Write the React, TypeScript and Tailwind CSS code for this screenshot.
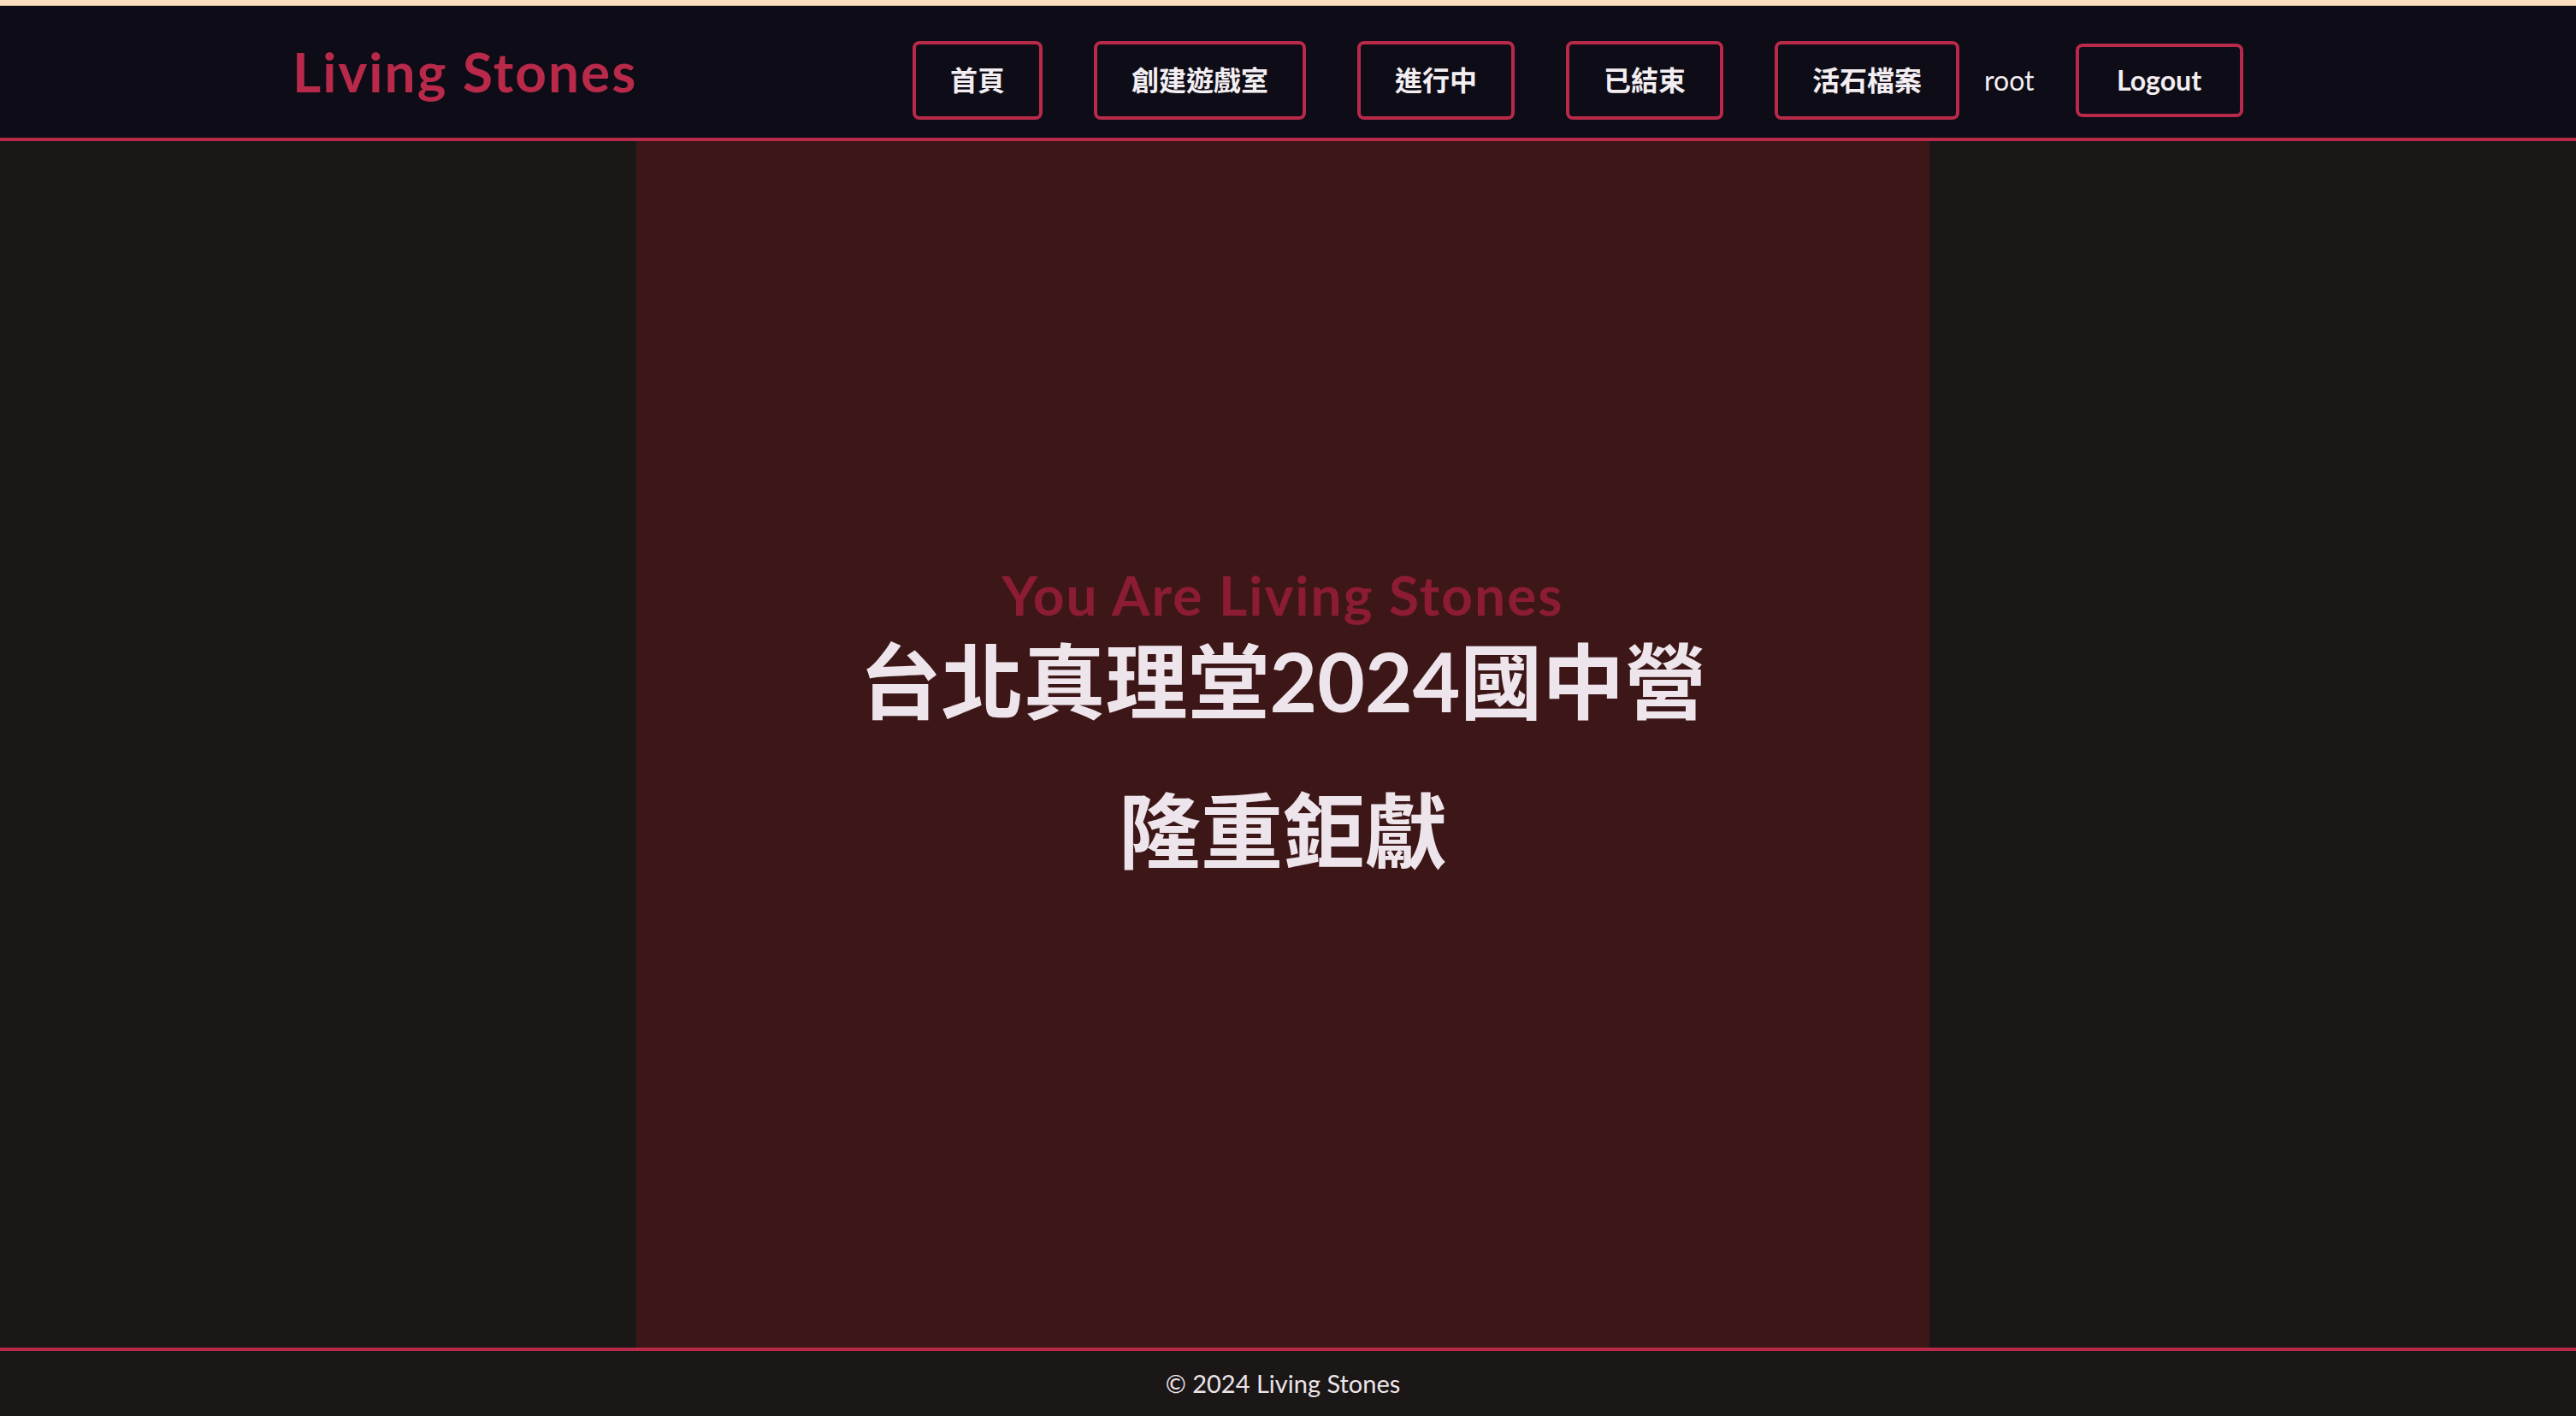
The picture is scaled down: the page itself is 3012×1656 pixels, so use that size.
import React from "react";

const navItems = ["首頁", "創建遊戲室", "進行中", "已結束", "活石檔案"];

export default function App() {
  return (
    <div className="min-h-screen flex flex-col bg-[#1b1716] font-[Lato,'Noto_Sans_CJK_TC',sans-serif]">
      {/* Browser top strip */}
      <div className="h-[6px] bg-[#fae0bf]" />
      <div className="h-px bg-[#cbb495]" />

      {/* Navbar */}
      <header className="h-[158px] flex items-center bg-[#0e0c16] border-b-4 border-[#b8294a] pl-[342px]">
        <div className="w-[725px] shrink-0">
          <span className="text-[64px] leading-none font-bold tracking-[2px] text-[#b8294a]">
            Living Stones
          </span>
        </div>
        <nav className="flex items-center mt-[20px]">
          <div className="flex items-center gap-[60px]">
            {navItems.map((item) => (
              <button
                key={item}
                className="border-4 border-[#b8294a] rounded-lg px-10 py-[18px] text-[32px] leading-[48px] font-bold text-[#f3eef2] bg-[#0e0c16]"
              >
                {item}
              </button>
            ))}
          </div>
          <span className="ml-[29px] text-[32px] leading-[48px] text-[#f3eef2]">
            root
          </span>
          <button className="ml-[48px] w-[196px] border-4 border-[#b8294a] rounded-lg py-[15px] text-[32px] leading-[48px] font-bold text-[#f3eef2] text-center">
            Logout
          </button>
        </nav>
      </header>

      {/* Main */}
      <main className="flex-1 flex justify-center pr-[12px]">
        <section className="w-[1512px] bg-[#3d1718] flex flex-col items-center justify-center pb-[58px]">
          <p className="text-[64px] leading-none font-bold tracking-[2px] text-[#8b1c33]">
            You Are Living Stones
          </p>
          <h1 className="mt-[20px] text-8xl leading-none font-bold text-[#eee5ec]">
            台北真理堂2024國中營
          </h1>
          <h2 className="mt-[79px] text-8xl leading-none font-bold text-[#eee5ec]">
            隆重鉅獻
          </h2>
        </section>
      </main>

      {/* Footer */}
      <footer className="h-[80px] border-t-4 border-[#b8294a] flex items-center justify-center pr-[12px]">
        <span className="text-[29px] text-[#ece4ea]">© 2024 Living Stones</span>
      </footer>
    </div>
  );
}
